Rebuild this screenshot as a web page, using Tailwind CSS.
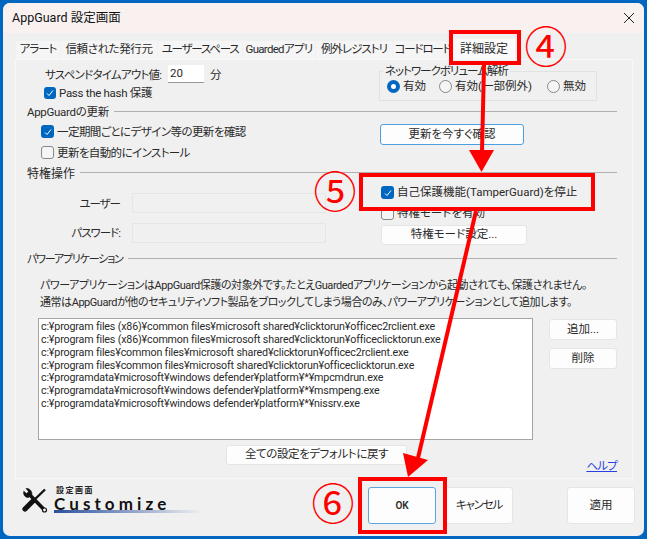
<!DOCTYPE html>
<html lang="ja">
<head>
  <meta charset="UTF-8" />
  <title>AppGuard 設定画面</title>
  <script src="https://cdn.jsdelivr.net/npm/@tailwindcss/browser@4"></script>
</head>
<body class="relative w-[647px] h-[539px] overflow-hidden bg-[#0067c0] p-[3px] font-['Roboto','Noto_Sans_CJK_JP',sans-serif] [font-feature-settings:'palt'] text-[11.5px] text-[#2a2a2a]">
  <div class="w-[641px] h-[533px] rounded-[7px] bg-[#f0f0f0] flex flex-col overflow-hidden">
    <!-- Title bar -->
    <header class="h-[30px] shrink-0 bg-[#f8f1f0] flex items-center justify-between pl-[9px] pr-[10px]">
      <span class="text-[12.5px] text-[#111]">AppGuard 設定画面</span>
      <svg class="w-[10px] h-[10px]" viewBox="0 0 10 10" fill="none" stroke="#222" stroke-width="1"><path d="M0 0l10 10M10 0L0 10"/></svg>
    </header>

    <!-- Tabs -->
    <div class="h-[26px] shrink-0 pl-[13px] pt-[8px] flex items-end gap-px">
      <div class="w-[44px] h-[18px] flex items-center justify-center bg-[#f5f5f5] whitespace-nowrap tracking-[-1px]">アラート</div>
      <div class="w-[96px] h-[18px] flex items-center justify-center bg-[#f5f5f5] whitespace-nowrap tracking-[-0.4px]">信頼された発行元</div>
      <div class="w-[84px] h-[18px] flex items-center justify-center bg-[#f5f5f5] whitespace-nowrap tracking-[-1.2px]">ユーザースペース</div>
      <div class="w-[72px] h-[18px] flex items-center justify-center bg-[#f5f5f5] whitespace-nowrap tracking-[-0.7px]">Guardedアプリ</div>
      <div class="w-[76px] h-[18px] flex items-center justify-center bg-[#f5f5f5] whitespace-nowrap tracking-[-1px]">例外レジストリ</div>
      <div class="w-[59px] h-[18px] flex items-center justify-center bg-[#f5f5f5] whitespace-nowrap tracking-[-1.2px]">コードロード</div>
      <div class="w-[62px] h-[20px] flex items-center justify-center bg-[#fafafa] whitespace-nowrap text-[12px]">詳細設定</div>
    </div>

    <!-- Tab panel -->
    <main class="ml-[12px] mr-[11px] h-[420px] shrink-0 border-l border-t border-r border-b border-[#f8f8f8] flex flex-col">
      <div class="h-[45px] flex">
        <div class="w-[363px] pt-[5px]">
          <div class="h-[18px] pl-[29px] flex items-center">
            <span class="w-[123px] pt-[3px] whitespace-nowrap tracking-[-0.75px]">サスペンドタイムアウト値:</span>
            <div class="w-[36px] h-[18px] bg-white border-b border-[#999] pl-[2px] leading-[16px]">20</div>
            <span class="ml-[6px] pt-[3px]">分</span>
          </div>
          <label class="mt-[3px] h-[13px] pl-[28px] flex items-center gap-[3px]">
            <span class="w-[12px] h-[12px] rounded-[3px] bg-[#0067c0] flex items-center justify-center"><svg class="w-[8px] h-[8px]" viewBox="0 0 8 8" fill="none" stroke="#fff" stroke-width="1"><path d="M1 4.5l2 2 4-5"/></svg></span>
            <span class="pt-[3px] tracking-[-0.3px]">Pass the hash 保護</span>
          </label>
        </div>
        <div class="relative mt-[11px] w-[218px] h-[30px] border border-[#e2e2e2] flex items-center">
          <span class="absolute -top-[8px] left-[3px] bg-[#f0f0f0] px-[2px] leading-[14px] whitespace-nowrap tracking-[-1px]">ネットワークボリューム解析</span>
          <div class="mt-[1px] pl-[7px] flex items-center">
            <span class="w-[13px] h-[13px] rounded-full border-[4px] border-[#0067c0] bg-white"></span>
            <span class="ml-[3px] w-[36px]">有効</span>
            <span class="w-[13px] h-[13px] rounded-full border border-[#888] bg-[#f5f5f5]"></span>
            <span class="ml-[3px] w-[92px] whitespace-nowrap">有効(一部例外)</span>
            <span class="w-[13px] h-[13px] rounded-full border border-[#888] bg-[#f5f5f5]"></span>
            <span class="ml-[3px]">無効</span>
          </div>
        </div>
      </div>

      <div class="h-[13px] ml-[11px] mr-[15px] flex items-center gap-[5px]">
        <span class="pt-[3px] whitespace-nowrap tracking-[-0.3px]">AppGuardの更新</span>
        <div class="flex-1 h-px bg-[#b0b0b0]"></div>
      </div>
      <div class="h-[48px] flex">
        <div class="w-[364px] pl-[25px] pt-[7px]">
          <label class="h-[13px] flex items-center gap-[3px]">
            <span class="w-[13px] h-[13px] rounded-[3px] bg-[#0067c0] flex items-center justify-center"><svg class="w-[8px] h-[8px]" viewBox="0 0 8 8" fill="none" stroke="#fff" stroke-width="1"><path d="M1 4.5l2 2 4-5"/></svg></span>
            <span class="pt-[2px] tracking-[-0.55px]">一定期間ごとにデザイン等の更新を確認</span>
          </label>
          <label class="mt-[8px] h-[13px] flex items-center gap-[3px]">
            <span class="w-[13px] h-[13px] rounded-[3px] border border-[#888] bg-[#f5f5f5]"></span>
            <span class="pt-[2px] tracking-[-0.6px]">更新を自動的にインストール</span>
          </label>
        </div>
        <button class="mt-[6px] w-[144px] h-[21px] rounded-[3px] border border-[#4a9fe0] bg-[#fdfdfd]">更新を今すぐ確認</button>
      </div>

      <div class="h-[13px] ml-[11px] mr-[15px] flex items-center gap-[5px]">
        <span class="pt-[2px] whitespace-nowrap text-[12px]">特権操作</span>
        <div class="flex-1 h-px bg-[#b0b0b0]"></div>
      </div>
      <div class="h-[73px] flex">
        <div class="w-[365px] pt-[14px]">
          <div class="h-[20px] flex items-center">
            <span class="w-[104px] pt-[3px] text-right tracking-[-1px]">ユーザー</span>
            <div class="ml-[12px] w-[194px] h-[20px] border border-[#e6e6e6]"></div>
          </div>
          <div class="mt-[10px] h-[20px] flex items-center">
            <span class="w-[104px] pt-[2px] text-right tracking-[-1px]">パスワード:</span>
            <div class="ml-[12px] w-[194px] h-[20px] border border-[#e6e6e6]"></div>
          </div>
        </div>
        <div class="pt-[7px]">
          <label class="h-[13px] flex items-center gap-[3px]">
            <span class="w-[13px] h-[13px] rounded-[3px] bg-[#0067c0] flex items-center justify-center"><svg class="w-[8px] h-[8px]" viewBox="0 0 8 8" fill="none" stroke="#fff" stroke-width="1"><path d="M1 4.5l2 2 4-5"/></svg></span>
            自己保護機能(TamperGuard)を停止
          </label>
          <label class="mt-[8px] h-[13px] flex items-center gap-[3px]">
            <span class="w-[13px] h-[13px] rounded-[3px] border border-[#888] bg-[#f5f5f5]"></span>
            特権モードを有効
          </label>
          <button class="mt-[5px] w-[146px] h-[20px] rounded-[3px] border border-[#e5e5e5] bg-[#fdfdfd]">特権モード設定...</button>
        </div>
      </div>

      <div class="h-[13px] ml-[11px] mr-[15px] flex items-center gap-[5px]">
        <span class="pt-[3px] whitespace-nowrap text-[11px] tracking-[-1.2px]">パワーアプリケーション</span>
        <div class="flex-1 h-px bg-[#b0b0b0]"></div>
      </div>
      <div class="mt-[12px] pl-[24px] leading-[17px] whitespace-nowrap text-[11px] tracking-[-0.45px]">
        <p>パワーアプリケーションはAppGuard保護の対象外です。たとえGuardedアプリケーションから起動されても、保護されません。</p>
        <p>通常はAppGuardが他のセキュリティソフト製品をブロックしてしまう場合のみ、パワーアプリケーションとして追加します。</p>
      </div>
      <div class="mt-[7px] pl-[22px] flex">
        <div class="w-[495px] h-[122px] bg-white border border-[#a5a5a5] pl-[2px] pt-[2px] text-[10.7px] leading-[12.85px] whitespace-nowrap tracking-[-0.16px]">
          <div>c:¥program files (x86)¥common files¥microsoft shared¥clicktorun¥officec2rclient.exe</div>
          <div>c:¥program files (x86)¥common files¥microsoft shared¥clicktorun¥officeclicktorun.exe</div>
          <div>c:¥program files¥common files¥microsoft shared¥clicktorun¥officec2rclient.exe</div>
          <div>c:¥program files¥common files¥microsoft shared¥clicktorun¥officeclicktorun.exe</div>
          <div>c:¥programdata¥microsoft¥windows defender¥platform¥*¥mpcmdrun.exe</div>
          <div>c:¥programdata¥microsoft¥windows defender¥platform¥*¥msmpeng.exe</div>
          <div>c:¥programdata¥microsoft¥windows defender¥platform¥*¥nissrv.exe</div>
        </div>
        <div class="ml-[16px] pt-[1px] flex flex-col gap-[8px]">
          <button class="w-[68px] h-[21px] rounded-[3px] border border-[#e5e5e5] bg-[#fdfdfd]">追加...</button>
          <button class="w-[68px] h-[21px] rounded-[3px] border border-[#e5e5e5] bg-[#fdfdfd]">削除</button>
        </div>
      </div>
      <div class="mt-[5px] h-[30px] pl-[210px] pr-[15px] flex justify-between">
        <button class="w-[181px] h-[20px] rounded-[3px] border border-[#e5e5e5] bg-[#fdfdfd] tracking-[-0.4px]">全ての設定をデフォルトに戻す</button>
        <a class="self-end mb-[2px] text-[#2a3fe0] underline leading-[14px] tracking-[-0.8px]">ヘルプ</a>
      </div>
    </main>

    <!-- Footer -->
    <footer class="flex-1 flex pt-[8px]">
      <div class="w-[365px] pl-[19px] flex items-start">
        <svg class="w-[26px] h-[26px] mt-[1px]" viewBox="0 0 26 26" fill="none" stroke="#111">
          <path d="M23 1.500L9 15" stroke-width="2.4"/>
          <path d="M10.500 13.500L3 21" stroke-width="5.2" stroke-linecap="round"/>
          <path d="M5.500 4.500L22 21.500" stroke-width="3.6"/>
          <path d="M4 0.500L6.500 3.500 5 6 1.800 3.200C1 6 2.500 9.500 6.500 9.500L10 6.500C10 2.500 7 0 4 0.500Z" fill="#111" stroke-width="0.6"/>
          <circle cx="22.500" cy="22" r="2" stroke-width="1.2" fill="#fff"/>
        </svg>
        <div class="relative ml-[6px] h-[34px] w-[150px]">
          <div class="text-[8px] font-bold leading-[8px] tracking-[1.5px] pl-[2px] text-[#222]">設定画面</div>
          <div class="font-['Lato',sans-serif] font-bold text-[17px] leading-[14px] mt-[2px] tracking-[4.1px] text-[#111]">Customize</div>
          <div class="absolute left-0 top-[23px] w-[148px] h-[3px] bg-gradient-to-r from-[#2a4f9f] to-transparent"></div>
        </div>
      </div>
      <button class="w-[68px] h-[37px] rounded-[3px] border border-[#5aa5e0] bg-[#fdfdfd] text-[10px] font-semibold">OK</button>
      <button class="ml-[9px] w-[68px] h-[37px] rounded-[3px] border border-[#e5e5e5] bg-[#fdfdfd] tracking-[-1.2px]">キャンセル</button>
      <button class="ml-[54px] w-[68px] h-[37px] rounded-[3px] border border-[#e5e5e5] bg-[#fdfdfd]">適用</button>
    </footer>
  </div>

  <!-- Red annotations over the screenshot -->
  <div class="absolute left-[449px] top-[30px] w-[72px] h-[35px] border-[4px] border-[#ff0000]"></div>
  <div class="absolute left-[359px] top-[173px] w-[236px] h-[38px] border-[4px] border-[#ff0000]"></div>
  <div class="absolute left-[358px] top-[477px] w-[89px] h-[57px] border-[4px] border-[#ff0000]"></div>
  <svg class="absolute left-0 top-0 w-[647px] h-[539px]" viewBox="0 0 647 539" fill="#ff0000" stroke="none">
    <path d="M484 65L482 152" stroke="#ff0000" stroke-width="4"/>
    <path d="M469 150H494L481.500 172Z"/>
    <path d="M476 211L418 458" stroke="#ff0000" stroke-width="4"/>
    <path d="M403 453L428 460L408 477Z"/>
  </svg>
  <span class="absolute left-[522px] top-[18px] w-[48px] text-center text-[43px] leading-[60px] text-[#ff0000]">④</span>
  <span class="absolute left-[311px] top-[163px] w-[48px] text-center text-[43px] leading-[60px] text-[#ff0000]">⑤</span>
  <span class="absolute left-[309px] top-[475px] w-[48px] text-center text-[43px] leading-[60px] text-[#ff0000]">⑥</span>
</body>
</html>
